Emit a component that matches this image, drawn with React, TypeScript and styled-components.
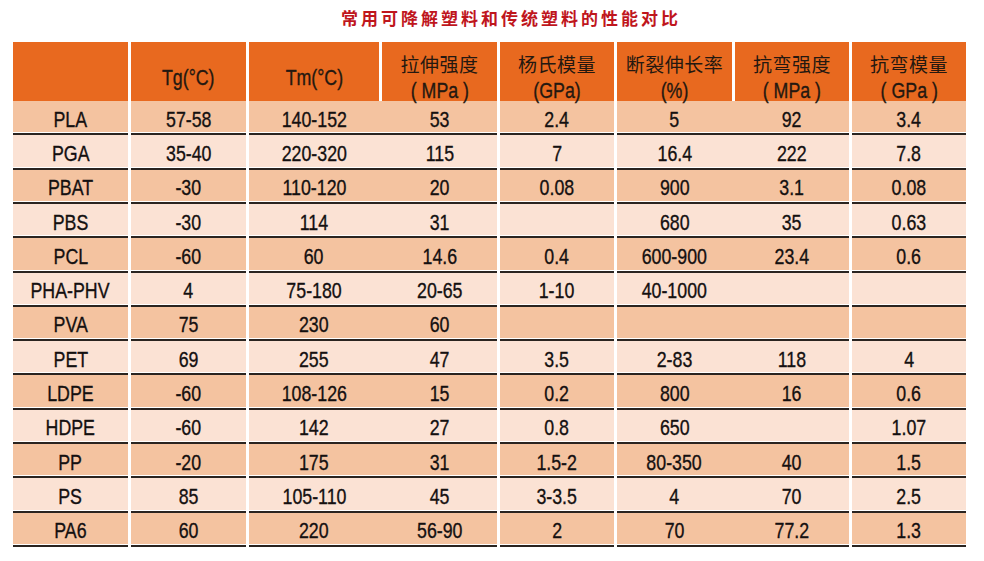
import React from "react";
import styled, { createGlobalStyle } from "styled-components";

const Global = createGlobalStyle`
  html, body { margin: 0; padding: 0; background: #ffffff; }
  * { box-sizing: border-box; }
`;

const DARK = "#2a2420";
const ORANGE = "#e8691f";
const TONES = { deep: "#f4c3a0", pale: "#fbe2d4" } as const;
type Tone = keyof typeof TONES;

const Page = styled.div`
  width: 984px;
  height: 561px;
  background: #ffffff;
  overflow: hidden;
`;

const Title = styled.h1`
  margin: 0;
  height: 42px;
  padding-left: 38px;
  line-height: 36px;
  text-align: center;
  font-family: "Noto Sans CJK SC", sans-serif;
  font-size: 17px;
  font-weight: 700;
  letter-spacing: 3px;
  color: #bf161d;
`;

const Table = styled.div`
  margin-left: 13px;
  width: 953px;
  display: flex;
  flex-direction: column;
`;

const HeaderRow = styled.div`
  display: grid;
  grid-template-columns: 115px 115px 130px 115px 114px 115px 114px 114px;
  column-gap: 3px;
  height: 58px;
`;

const HeadCell = styled.div`
  background: ${ORANGE};
  border-bottom: 2px solid ${DARK};
  box-shadow: inset 0 -1px 0 rgba(255, 255, 255, 0.5);
  padding-top: 8px;
  display: flex;
  flex-direction: column;
  align-items: center;
  justify-content: center;
  color: #241810;
`;

const HeadZh = styled.span`
  font-family: "Noto Sans CJK SC", sans-serif;
  font-size: 19px;
  line-height: 27px;
  letter-spacing: 0.5px;
  white-space: nowrap;
`;

/* condensed grotesque look: Arial-metric face narrowed */
const Narrow = styled.span`
  display: inline-block;
  font-family: "Liberation Sans", Arial, sans-serif;
  font-size: 22.5px;
  line-height: 27px;
  white-space: nowrap;
  -webkit-text-stroke: 0.35px currentColor;
  transform: scaleX(0.79);
`;

const Body = styled.div`
  margin-top: 1px;
  display: grid;
  grid-template-rows: repeat(13, 1fr);
  height: 446px;
`;

const Row = styled.div`
  display: grid;
  grid-template-columns: 115px 115px 248px 114px 232px 114px;
  column-gap: 3px;
`;

const Segment = styled.div<{ $tone: Tone; $split?: string }>`
  background: ${(p) => TONES[p.$tone]};
  border-bottom: 2px solid ${DARK};
  box-shadow: inset 0 -1px 0 #ffffff;
  display: grid;
  grid-template-columns: ${(p) => p.$split ?? "1fr"};
  column-gap: 3px;
`;

const Value = styled.div`
  display: flex;
  align-items: center;
  justify-content: center;
  padding-top: 4px;
  color: #141010;
`;

type Head = { zh?: string; unit?: string };

const heads: Head[] = [
  {},
  { unit: "Tg(°C)" },
  { unit: "Tm(°C)" },
  { zh: "拉伸强度", unit: "( MPa )" },
  { zh: "杨氏模量", unit: "(GPa)" },
  { zh: "断裂伸长率", unit: "(%)" },
  { zh: "抗弯强度", unit: "( MPa )" },
  { zh: "抗弯模量", unit: "( GPa )" },
];

const rows: string[][] = [
  ["PLA", "57-58", "140-152", "53", "2.4", "5", "92", "3.4"],
  ["PGA", "35-40", "220-320", "115", "7", "16.4", "222", "7.8"],
  ["PBAT", "-30", "110-120", "20", "0.08", "900", "3.1", "0.08"],
  ["PBS", "-30", "114", "31", "", "680", "35", "0.63"],
  ["PCL", "-60", "60", "14.6", "0.4", "600-900", "23.4", "0.6"],
  ["PHA-PHV", "4", "75-180", "20-65", "1-10", "40-1000", "", ""],
  ["PVA", "75", "230", "60", "", "", "", ""],
  ["PET", "69", "255", "47", "3.5", "2-83", "118", "4"],
  ["LDPE", "-60", "108-126", "15", "0.2", "800", "16", "0.6"],
  ["HDPE", "-60", "142", "27", "0.8", "650", "", "1.07"],
  ["PP", "-20", "175", "31", "1.5-2", "80-350", "40", "1.5"],
  ["PS", "85", "105-110", "45", "3-3.5", "4", "70", "2.5"],
  ["PA6", "60", "220", "56-90", "2", "70", "77.2", "1.3"],
];

const Cell = ({ v }: { v: string }) => (
  <Value>{v && <Narrow>{v}</Narrow>}</Value>
);

export default function App() {
  return (
    <Page>
      <Global />
      <Title>常用可降解塑料和传统塑料的性能对比</Title>
      <Table>
        <HeaderRow>
          {heads.map((h, i) => (
            <HeadCell key={i}>
              {h.zh && <HeadZh>{h.zh}</HeadZh>}
              {h.unit && <Narrow>{h.unit}</Narrow>}
            </HeadCell>
          ))}
        </HeaderRow>
        <Body>
          {rows.map((r, i) => {
            const tone: Tone = i % 2 === 0 ? "deep" : "pale";
            return (
              <Row key={r[0]}>
                <Segment $tone={tone}><Cell v={r[0]} /></Segment>
                <Segment $tone={tone}><Cell v={r[1]} /></Segment>
                <Segment $tone={tone} $split="130px 115px">
                  <Cell v={r[2]} />
                  <Cell v={r[3]} />
                </Segment>
                <Segment $tone={tone}><Cell v={r[4]} /></Segment>
                <Segment $tone={tone} $split="115px 114px">
                  <Cell v={r[5]} />
                  <Cell v={r[6]} />
                </Segment>
                <Segment $tone={tone}><Cell v={r[7]} /></Segment>
              </Row>
            );
          })}
        </Body>
      </Table>
    </Page>
  );
}
